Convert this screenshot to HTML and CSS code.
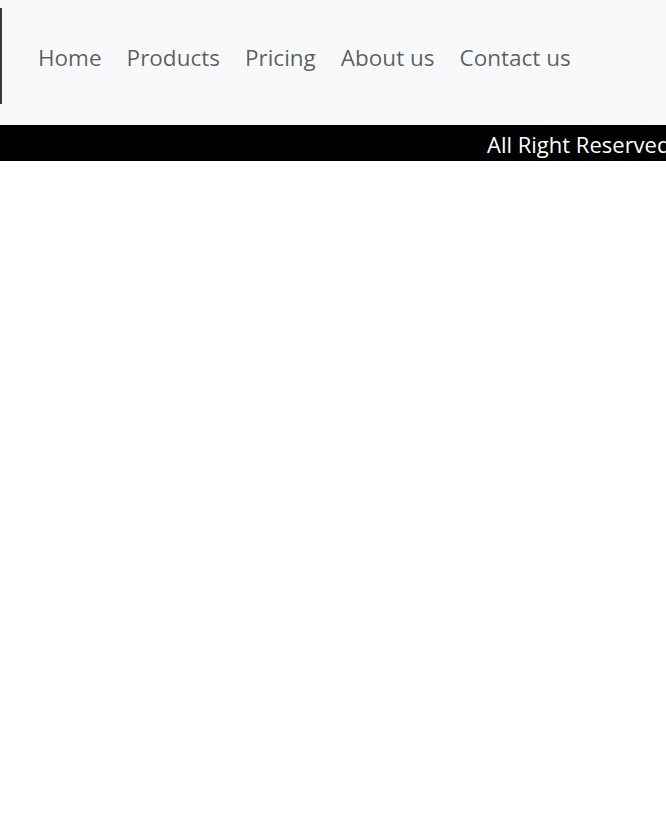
FILE: index.html
```html
<!DOCTYPE html>
<html>
<head>
<meta charset="utf-8">
<link rel="stylesheet" href="styles.css">
</head>
<body>
<nav class="navbar">
  <div class="brand"></div>
  <ul class="nav-list">
    <li><a class="nav-link" href="#">Home</a></li>
    <li><a class="nav-link" href="#">Products</a></li>
    <li><a class="nav-link" href="#">Pricing</a></li>
    <li><a class="nav-link" href="#">About us</a></li>
    <li><a class="nav-link" href="#">Contact us</a></li>
  </ul>
</nav>
<footer class="footer">
  <p class="footer-text">All Right Reserved &copy; 2023</p>
</footer>
</body>
</html>
```
FILE: styles.css
```css
* { box-sizing: border-box; }
html, body { margin: 0; padding: 0; background: #fff; }
body { font-family: "Open Sans", "Noto Sans", sans-serif; overflow: hidden; width: 666px; }
.navbar {
  height: 125px;
  background: #f8f9fa;
  display: flex;
  align-items: flex-start;
}
.brand {
  width: 2px;
  height: 96px;
  margin-top: 8px;
  background: #3a3a3a;
  flex: none;
}
.nav-list {
  list-style: none;
  margin: 0;
  padding: 0 0 0 36px;
  display: flex;
  gap: 25px;
  margin-top: 41px;
}
.nav-link {
  font-size: 22.5px;
  line-height: 34px;
  color: rgba(0,0,0,0.64);
  text-decoration: none;
  white-space: nowrap;
}
.footer {
  height: 36px;
  background: #000;
  overflow: hidden;
  white-space: nowrap;
}
.footer-text {
  margin: 0;
  padding-left: 487px;
  color: #fff;
  font-size: 22px;
  line-height: 38px;
}
```
